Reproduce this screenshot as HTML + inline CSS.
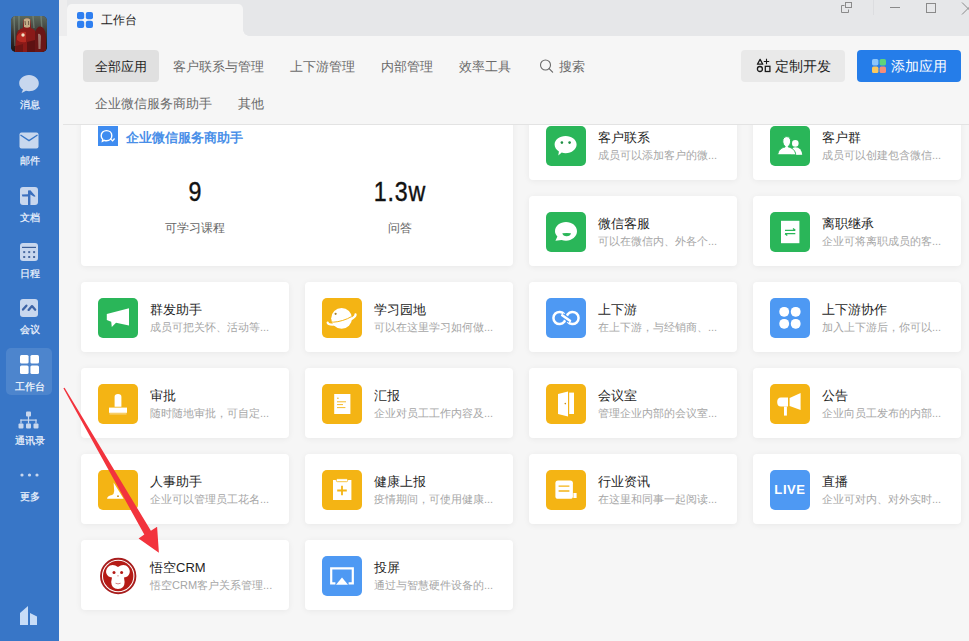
<!DOCTYPE html>
<html><head><meta charset="utf-8"><style>
*{margin:0;padding:0;box-sizing:border-box}
html,body{width:969px;height:641px;overflow:hidden;background:#f6f6f6;font-family:"Liberation Sans",sans-serif}
body{position:relative}
.a{position:absolute}
svg{display:block}
#side{left:0;top:0;width:59px;height:641px;background:#3876c7}
#titlebar{left:59px;top:0;width:910px;height:36px;background:#e6e7e9}
#tab{left:67px;top:4px;width:176px;height:32px;background:#f6f6f6;border-radius:5px 5px 0 0}
#hdr{left:59px;top:36px;width:910px;height:88px;background:#f6f6f6}
#hline{left:63px;top:124px;width:906px;height:1px;background:#e3e3e3}
.nav{height:32px;line-height:32px;font-size:13px;color:#6a6a6a;white-space:nowrap}
.card{background:#fff;border-radius:4px;box-shadow:0 1px 6px rgba(0,0,0,0.06)}
.ic{width:40px;height:40px;border-radius:5px;overflow:hidden}
.t{font-size:13px;line-height:16px;color:#1f1f1f;white-space:nowrap}
.d{font-size:11px;line-height:14px;color:#a6a6a6;white-space:nowrap}
.sl{font-size:10px;line-height:12px;color:#f4f8ff;-webkit-text-stroke:0.2px #f4f8ff;white-space:nowrap;text-align:center;width:59px;left:0}
.g{background:#2db55a}.o{background:#f9ae0b}.b{background:#4b91ee}
</style></head><body>
<div class="a card" style="left:81px;top:110px;width:432px;height:156px"></div>
<svg class="a" style="left:98px;top:126px" width="20" height="20" viewBox="0 0 20 20"><rect width="20" height="20" fill="#3f8cf0"/><path d="M8.5 4.6 C11.6 4.6 13.8 6.8 13.8 9.7 C13.8 12.6 11.6 14.8 8.5 14.8 C7.7 14.8 7 14.6 6.3 14.3 L4.4 15.2 L4.7 13.3 C3.7 12.4 3.2 11.1 3.2 9.7 C3.2 6.8 5.4 4.6 8.5 4.6Z" fill="none" stroke="#fff" stroke-width="1.4"/><path d="M12.3 12.6 L14.6 14.9 L16.6 12.5" stroke="#fff" stroke-width="1.3" fill="none"/></svg>
<div class="a" style="left:126px;top:129.5px;font-size:13px;line-height:16px;font-weight:bold;color:#4a8fe8;white-space:nowrap">企业微信服务商助手</div>
<div class="a" style="left:145px;top:176.5px;width:100px;text-align:center;font-size:27px;line-height:30px;color:#111;-webkit-text-stroke:0.4px #111;transform:scaleX(0.86)">9</div>
<div class="a" style="left:350px;top:176.5px;width:100px;text-align:center;font-size:27px;line-height:30px;color:#111;letter-spacing:1px;-webkit-text-stroke:0.4px #111;transform:scaleX(0.86)">1.3w</div>
<div class="a" style="left:145px;top:221px;width:100px;text-align:center;font-size:12px;line-height:14px;color:#666">可学习课程</div>
<div class="a" style="left:350px;top:221px;width:100px;text-align:center;font-size:12px;line-height:14px;color:#666">问答</div>
<div class="a card" style="left:529px;top:110px;width:208px;height:70px"></div>
<div class="a" style="left:546px;top:126px"><svg width="40" height="40" viewBox="0 0 40 40"><rect width="40" height="40" rx="5" fill="#2ab659"/><path d="M19.6 10 C25.8 10 30.6 13.8 30.6 18.6 C30.6 23.4 25.8 27.2 19.6 27.2 C18.2 27.2 16.9 27 15.7 26.6 L12.3 29.6 L12.9 25.4 C10.3 23.9 8.6 21.4 8.6 18.6 C8.6 13.8 13.4 10 19.6 10Z" fill="#fff"/><circle cx="15.9" cy="16.6" r="1.3" fill="#1f8f44"/><circle cx="23.6" cy="16.6" r="1.3" fill="#1f8f44"/></svg></div>
<div class="a t" style="left:598px;top:130px">客户联系</div>
<div class="a d" style="left:598px;top:148px">成员可以添加客户的微...</div>
<div class="a card" style="left:753px;top:110px;width:208px;height:70px"></div>
<div class="a" style="left:770px;top:126px"><svg width="40" height="40" viewBox="0 0 40 40"><rect width="40" height="40" rx="5" fill="#2ab659"/><circle cx="25.3" cy="17.4" r="3.3" fill="#fff"/><path d="M21 29 L21 25 Q22 21.5 25.3 21.2 Q31.5 21.5 32.2 28.8 Z" fill="#fff"/><path d="M16.7 10.6 C19.3 10.6 20.6 12.6 20.6 15.2 C20.6 17.6 19.6 19.4 18.3 20.3 L18.3 21 C22.2 21.7 25.2 24.2 25.8 28.8 L7.7 28.8 C8.2 24.2 11.2 21.7 15.1 21 L15.1 20.3 C13.8 19.4 12.8 17.6 12.8 15.2 C12.8 12.6 14.1 10.6 16.7 10.6Z" fill="#fff" stroke="#2ab659" stroke-width="1"/></svg></div>
<div class="a t" style="left:822px;top:130px">客户群</div>
<div class="a d" style="left:822px;top:148px">成员可以创建包含微信...</div>
<div class="a card" style="left:529px;top:196px;width:208px;height:70px"></div>
<div class="a" style="left:546px;top:212px"><svg width="40" height="40" viewBox="0 0 40 40"><rect width="40" height="40" rx="5" fill="#2ab659"/><path d="M20 10 C25.8 10 31 13.9 31 19.3 C31 24.7 25.8 28.7 20 28.7 C18.5 28.7 17 28.4 15.6 27.9 L9.4 28.8 L11.4 24.4 C9.9 22.9 9 21.2 9 19.3 C9 13.9 14.2 10 20 10Z" fill="#fff"/><path d="M16.3 21.2 Q20.6 21 25 21.2 Q24.4 24.2 20.6 24.2 Q17 24.2 16.3 21.2Z" fill="#2ab659"/></svg></div>
<div class="a t" style="left:598px;top:216px">微信客服</div>
<div class="a d" style="left:598px;top:234px">可以在微信内、外各个...</div>
<div class="a card" style="left:753px;top:196px;width:208px;height:70px"></div>
<div class="a" style="left:770px;top:212px"><svg width="40" height="40" viewBox="0 0 40 40"><rect width="40" height="40" rx="5" fill="#2ab659"/><rect x="11" y="8.8" width="18.4" height="22.4" fill="#fff"/><path d="M15 18.3 L25.3 18.3 M23 16.6 L25.3 18.3 M15 21.7 L25.3 21.7 M15 21.7 L17.3 23.4" stroke="#2ab659" stroke-width="1.3" fill="none"/></svg></div>
<div class="a t" style="left:822px;top:216px">离职继承</div>
<div class="a d" style="left:822px;top:234px">企业可将离职成员的客...</div>
<div class="a card" style="left:81px;top:282px;width:208px;height:70px"></div>
<div class="a" style="left:98px;top:298px"><svg width="40" height="40" viewBox="0 0 40 40"><rect width="40" height="40" rx="5" fill="#2ab659"/><path d="M8.8 16 L31 10.3 L31 27.5 L18 24.8 L13.8 29 L13.2 23.7 L8.8 21.9Z" fill="#fff"/></svg></div>
<div class="a t" style="left:150px;top:302px">群发助手</div>
<div class="a d" style="left:150px;top:320px">成员可把关怀、活动等...</div>
<div class="a card" style="left:305px;top:282px;width:208px;height:70px"></div>
<div class="a" style="left:322px;top:298px"><svg width="40" height="40" viewBox="0 0 40 40"><rect width="40" height="40" rx="5" fill="#f4b414"/><defs><clipPath id="pl"><circle cx="19.6" cy="20.3" r="10.4"/></clipPath></defs><circle cx="19.6" cy="20.3" r="10.4" fill="#fff"/><path d="M5.7 24.7 A14.5 4.5 -17 0 0 33.5 16.3" stroke="#fff" stroke-width="2.3" fill="none" stroke-linecap="round"/><path d="M5.9 23.0 A14.5 4.5 -17 0 0 33.3 14.6" stroke="#f4b414" stroke-width="1" fill="none" clip-path="url(#pl)"/><circle cx="13.6" cy="15.8" r="1.1" fill="#a8822e"/></svg></div>
<div class="a t" style="left:374px;top:302px">学习园地</div>
<div class="a d" style="left:374px;top:320px">可以在这里学习如何做...</div>
<div class="a card" style="left:529px;top:282px;width:208px;height:70px"></div>
<div class="a" style="left:546px;top:298px"><svg width="40" height="40" viewBox="0 0 40 40"><rect width="40" height="40" rx="5" fill="#4e99f3"/><path d="M18.3 16.2 A6.1 6.1 0 1 0 18.3 23.8 L21.7 16.2 A6.1 6.1 0 1 1 21.7 23.8" stroke="#fff" stroke-width="2.5" fill="none"/><path d="M16.2 17.2 L24 22.8" stroke="#4e99f3" stroke-width="4.8"/><path d="M16.2 17.2 L24 22.8" stroke="#fff" stroke-width="2.5" stroke-linecap="round"/></svg></div>
<div class="a t" style="left:598px;top:302px">上下游</div>
<div class="a d" style="left:598px;top:320px">在上下游，与经销商、...</div>
<div class="a card" style="left:753px;top:282px;width:208px;height:70px"></div>
<div class="a" style="left:770px;top:298px"><svg width="40" height="40" viewBox="0 0 40 40"><rect width="40" height="40" rx="5" fill="#4e99f3"/><rect x="9.3" y="8.9" width="9.8" height="9.8" rx="4.6" fill="#fff"/><rect x="20.8" y="8.9" width="9.8" height="9.8" rx="4.6" fill="#fff"/><rect x="9.3" y="20.9" width="9.8" height="9.8" rx="4.6" fill="#fff"/><rect x="20.8" y="20.9" width="9.8" height="9.8" rx="4.6" fill="#fff"/></svg></div>
<div class="a t" style="left:822px;top:302px">上下游协作</div>
<div class="a d" style="left:822px;top:320px">加入上下游后，你可以...</div>
<div class="a card" style="left:81px;top:368px;width:208px;height:70px"></div>
<div class="a" style="left:98px;top:384px"><svg width="40" height="40" viewBox="0 0 40 40"><rect width="40" height="40" rx="5" fill="#f4b414"/><path d="M16.6 12.8 Q16.6 10 20 10 Q23.4 10 23.4 12.8 L23.4 22.8 L16.6 22.8Z" fill="#fff"/><rect x="11" y="23.6" width="18" height="5.2" fill="#fff"/><rect x="11.5" y="29.4" width="17" height="1" fill="#fff" opacity="0.6"/></svg></div>
<div class="a t" style="left:150px;top:388px">审批</div>
<div class="a d" style="left:150px;top:406px">随时随地审批，可自定...</div>
<div class="a card" style="left:305px;top:368px;width:208px;height:70px"></div>
<div class="a" style="left:322px;top:384px"><svg width="40" height="40" viewBox="0 0 40 40"><rect width="40" height="40" rx="5" fill="#f4b414"/><rect x="12.2" y="10" width="16.2" height="20" fill="#fff"/><circle cx="15.9" cy="14.3" r="0.8" fill="#f4b414"/><path d="M15 17.8 L24 17.8 M15 20.6 L21 20.6 M15 23.6 L23.4 23.6" stroke="#f4b414" stroke-width="0.9"/></svg></div>
<div class="a t" style="left:374px;top:388px">汇报</div>
<div class="a d" style="left:374px;top:406px">企业对员工工作内容及...</div>
<div class="a card" style="left:529px;top:368px;width:208px;height:70px"></div>
<div class="a" style="left:546px;top:384px"><svg width="40" height="40" viewBox="0 0 40 40"><rect width="40" height="40" rx="5" fill="#f4b414"/><path d="M12 10 L22 7.4 L22 32.6 L12 30Z" fill="#fff"/><rect x="23.2" y="8.6" width="4.8" height="21.4" fill="#fff"/><circle cx="19.3" cy="19.6" r="0.8" fill="#c88a10"/></svg></div>
<div class="a t" style="left:598px;top:388px">会议室</div>
<div class="a d" style="left:598px;top:406px">管理企业内部的会议室...</div>
<div class="a card" style="left:753px;top:368px;width:208px;height:70px"></div>
<div class="a" style="left:770px;top:384px"><svg width="40" height="40" viewBox="0 0 40 40"><rect width="40" height="40" rx="5" fill="#f4b414"/><path d="M11 13.4 L18 13.4 L18 22.5 L11 22.5 Q7.2 22.5 7.2 18 Q7.2 13.4 11 13.4Z" fill="#fff"/><path d="M19.6 14 L30.6 9 L30.6 26 L19.6 21.9Z" fill="#fff"/><rect x="14" y="22.5" width="2.9" height="9.1" fill="#fff"/></svg></div>
<div class="a t" style="left:822px;top:388px">公告</div>
<div class="a d" style="left:822px;top:406px">企业向员工发布的内部...</div>
<div class="a card" style="left:81px;top:454px;width:208px;height:70px"></div>
<div class="a" style="left:98px;top:470px"><svg width="40" height="40" viewBox="0 0 40 40"><rect width="40" height="40" rx="5" fill="#f4b414"/><path d="M9 28.8 Q9.6 25.6 14 25 Q16 24.4 16.2 21 L15.6 12.6 L25.6 28.8Z" fill="#fff"/><circle cx="20" cy="26.2" r="0.9" fill="#c88a10"/></svg></div>
<div class="a t" style="left:150px;top:474px">人事助手</div>
<div class="a d" style="left:150px;top:492px">企业可以管理员工花名...</div>
<div class="a card" style="left:305px;top:454px;width:208px;height:70px"></div>
<div class="a" style="left:322px;top:470px"><svg width="40" height="40" viewBox="0 0 40 40"><rect width="40" height="40" rx="5" fill="#f4b414"/><rect x="11" y="10" width="18.4" height="20" fill="#fff"/><rect x="14.4" y="8.7" width="11.2" height="3" rx="1" fill="#fff" stroke="#f4b414" stroke-width="0.8"/><path d="M15.2 20.5 L24.8 20.5 M20 15.8 L20 25.2" stroke="#f4b414" stroke-width="1.8"/></svg></div>
<div class="a t" style="left:374px;top:474px">健康上报</div>
<div class="a d" style="left:374px;top:492px">疫情期间，可使用健康...</div>
<div class="a card" style="left:529px;top:454px;width:208px;height:70px"></div>
<div class="a" style="left:546px;top:470px"><svg width="40" height="40" viewBox="0 0 40 40"><rect width="40" height="40" rx="5" fill="#f4b414"/><rect x="9.4" y="10.6" width="17.5" height="18.2" rx="2.6" fill="#fff"/><path d="M12.6 16.2 L23.4 16.2 M12.6 21 L23.4 21" stroke="#f4b414" stroke-width="1.3"/><rect x="27.4" y="23" width="3.2" height="5" fill="#fff"/></svg></div>
<div class="a t" style="left:598px;top:474px">行业资讯</div>
<div class="a d" style="left:598px;top:492px">在这里和同事一起阅读...</div>
<div class="a card" style="left:753px;top:454px;width:208px;height:70px"></div>
<div class="a" style="left:770px;top:470px"><svg width="40" height="40" viewBox="0 0 40 40"><rect width="40" height="40" rx="5" fill="#4e99f3"/><text x="20" y="24.2" text-anchor="middle" font-family="Liberation Sans" font-weight="bold" font-size="13" fill="#fff" letter-spacing="0.6">LIVE</text></svg></div>
<div class="a t" style="left:822px;top:474px">直播</div>
<div class="a d" style="left:822px;top:492px">企业可对内、对外实时...</div>
<div class="a card" style="left:81px;top:540px;width:208px;height:70px"></div>
<div class="a" style="left:98px;top:556px"><svg width="40" height="40" viewBox="0 0 40 40">
<circle cx="20.2" cy="20" r="17.2" fill="none" stroke="#a81d1d" stroke-width="1.9"/>
<circle cx="20.2" cy="20" r="15.2" fill="#b51b16"/>
<path d="M20 11 Q16 8 12 9.5 Q7.5 12 8.2 17 Q9.5 21 14 21.5 L13.2 26 Q13.5 32.9 20 32.9 Q26.6 32.9 26.6 26 L26 21.5 Q30.5 21 31.6 17 Q32.4 12 28 9.5 Q24 8 20 11Z" fill="#fff"/>
<circle cx="16" cy="16.6" r="1.5" fill="#b51b16"/><circle cx="23.6" cy="16.6" r="1.5" fill="#b51b16"/>
<circle cx="20" cy="19.8" r="0.6" fill="#c35050"/>
<path d="M17.5 27.2 Q20 28.6 22.6 27.2" stroke="#c35050" stroke-width="0.7" fill="none"/>
</svg></div>
<div class="a t" style="left:150px;top:560px">悟空CRM</div>
<div class="a d" style="left:150px;top:578px">悟空CRM客户关系管理...</div>
<div class="a card" style="left:305px;top:540px;width:208px;height:70px"></div>
<div class="a" style="left:322px;top:556px"><svg width="40" height="40" viewBox="0 0 40 40"><rect width="40" height="40" rx="5" fill="#4e99f3"/><path d="M13.4 27.4 L9.2 27.4 L9.2 12.3 L30.8 12.3 L30.8 27.4 L26.6 27.4" stroke="#fff" stroke-width="2.2" fill="none"/><path d="M20 21.6 L26 28.8 L14 28.8Z" fill="#fff"/></svg></div>
<div class="a t" style="left:374px;top:560px">投屏</div>
<div class="a d" style="left:374px;top:578px">通过与智慧硬件设备的...</div>
<div id="hdr" class="a"></div>
<div id="hline" class="a"></div>
<div class="a" style="left:83px;top:50px;width:76px;height:32px;border-radius:4px;background:#e0e0e0"></div>
<div class="a nav" style="left:95px;top:50.5px;color:#1f1f1f">全部应用</div>
<div class="a nav" style="left:173px;top:50.5px;color:#6a6a6a">客户联系与管理</div>
<div class="a nav" style="left:290px;top:50.5px;color:#6a6a6a">上下游管理</div>
<div class="a nav" style="left:381px;top:50.5px;color:#6a6a6a">内部管理</div>
<div class="a nav" style="left:459px;top:50.5px;color:#6a6a6a">效率工具</div>
<div class="a nav" style="left:559px;top:50.5px;color:#6a6a6a">搜索</div>
<div class="a nav" style="left:95px;top:87.5px">企业微信服务商助手</div>
<div class="a nav" style="left:238px;top:87.5px">其他</div>
<svg class="a" style="left:539px;top:59px" width="15" height="15" viewBox="0 0 15 15">
<circle cx="6.5" cy="6" r="5" stroke="#6a6a6a" stroke-width="1.1" fill="none"/><path d="M10.1 9.6 L13.6 13.1" stroke="#6a6a6a" stroke-width="1.2" stroke-linecap="round"/></svg>
<div class="a" style="left:741px;top:50px;width:104px;height:32px;border-radius:4px;background:#e9e9e9"></div>
<svg class="a" style="left:756px;top:58px" width="15" height="16" viewBox="0 0 15 16">
<g stroke="#1a1a1a" stroke-width="1.3" fill="none"><path d="M4.1 1.4 L6.8 6.2 L1.4 6.2Z" stroke-linejoin="round"/><path d="M10.5 0.8 L10.5 6.2 M7.8 3.5 L13.2 3.5" stroke-width="1.1"/>
<circle cx="3.9" cy="11" r="2.5"/><rect x="9.3" y="8.3" width="4.6" height="5.2"/></g></svg>
<div class="a" style="left:775px;top:50px;height:32px;line-height:32px;font-size:14px;color:#1f1f1f;white-space:nowrap">定制开发</div>
<div class="a" style="left:857px;top:50px;width:104px;height:32px;border-radius:4px;background:#257de9"></div>
<svg class="a" style="left:872px;top:59px" width="14" height="14" viewBox="0 0 14 14">
<rect x="0" y="0" width="6.4" height="6.4" rx="1.6" fill="#8cc6fb"/><rect x="7.6" y="0" width="6.4" height="6.4" rx="1.6" fill="#5fd37a"/>
<rect x="0" y="7.6" width="6.4" height="6.4" rx="1.6" fill="#fbc95d"/><rect x="7.6" y="7.6" width="6.4" height="6.4" rx="1.6" fill="#f58d78"/></svg>
<div class="a" style="left:891px;top:50px;height:32px;line-height:32px;font-size:14px;color:#fff;white-space:nowrap">添加应用</div>
<div id="titlebar" class="a"></div>
<div class="a" style="left:59px;top:0px;width:8px;height:36px;background:#ededee"></div>
<div id="tab" class="a"></div>
<div class="a" style="left:243px;top:30px;width:6px;height:6px;background:radial-gradient(circle at 100% 0,rgba(246,246,246,0) 5.5px,#f6f6f6 6px)"></div>
<svg class="a" style="left:77px;top:12px" width="16" height="16" viewBox="0 0 16 16">
<g fill="#2f7ff0"><rect x="0" y="0" width="7.2" height="7.2" rx="2"/><rect x="8.8" y="0" width="7.2" height="7.2" rx="2"/>
<rect x="0" y="8.8" width="7.2" height="7.2" rx="2"/><rect x="8.8" y="8.8" width="7.2" height="7.2" rx="2"/></g></svg>
<div class="a" style="left:101px;top:13px;font-size:12px;line-height:14px;color:#222">工作台</div>
<svg class="a" style="left:838px;top:0px" width="131" height="16" viewBox="0 0 131 16">
<g stroke="#8a8a8a" stroke-width="1" fill="none">
<path d="M3.5 5.5 L3.5 12.5 L10.5 12.5 L10.5 9.5"/><path d="M3.5 5.5 L6.5 5.5"/>
<rect x="7.5" y="2.5" width="6" height="5"/>
<path d="M52 7.5 L62 7.5"/>
<rect x="88.5" y="3.5" width="9" height="9"/>
<path d="M124 2.5 L136 14.5 M136 2.5 L124 14.5"/>
</g>
<path d="M35.5 0 L35.5 15" stroke="#dcdde0" stroke-width="1"/>
</svg>
<div id="side" class="a">
<div class="a" style="left:11px;top:16px;width:36px;height:36px;border-radius:5px;overflow:hidden;background:#3a2a22">
<svg width="36" height="36" viewBox="0 0 36 36">
<defs><linearGradient id="av1" x1="0" y1="0" x2="0" y2="1"><stop offset="0" stop-color="#5d6a5e"/><stop offset="0.5" stop-color="#3a3632"/><stop offset="1" stop-color="#1c1414"/></linearGradient></defs>
<rect width="36" height="36" fill="url(#av1)"/>
<path d="M3 0 L4 30 M8 0 L8 14 M22 0 L23 12 M30 0 L31 14" stroke="#8fa596" stroke-width="1.4" opacity="0.45"/>
<path d="M4 36 L5 21 Q6 13 12 12 L12.5 4 Q16 0.5 19.5 4 L20 12 Q25 13 25.5 20 L25 36Z" fill="#8a1a18"/>
<path d="M12.8 3.5 Q16 1 19.2 3.5 L19 11 Q16 12.5 13 11Z" fill="#c4ad88"/>
<path d="M14 5 L14.5 9 M17.5 5 L17.6 9" stroke="#5a4a3a" stroke-width="0.8"/>
<path d="M24 36 L24 16 Q27 9 31 11 Q35 14 35 22 L35 36Z" fill="#6a1616"/>
<path d="M27 18 Q29 17 30 20 L29.5 33 L27.5 33Z" fill="#a98a80" opacity="0.8"/>
<path d="M6 20 Q9 15 15 16 L15 26 Q9 27 6 24Z" fill="#b52a22"/>
<path d="M16 26 L24 24 L24 36 L16 36Z" fill="#4a1010" opacity="0.7"/>
<path d="M5 30 L12 28 L12 36 L5 36Z" fill="#5a1212" opacity="0.6"/>
<circle cx="12" cy="19" r="1.7" fill="#f1e4c8"/>
</svg></div>
<div class="a" style="left:6px;top:348px;width:46px;height:47px;border-radius:5px;background:rgba(255,255,255,0.11)"></div>
<svg class="a" style="left:18px;top:74px" width="22" height="20" viewBox="0 0 22 20">
<path d="M11 1 C16.6 1 20.8 4.7 20.8 9.2 C20.8 13.7 16.6 17.2 11 17.2 C9.9 17.2 8.9 17.1 8 16.8 L3.6 18.9 L5 15.6 C2.6 14.1 1.2 11.8 1.2 9.2 C1.2 4.7 5.4 1 11 1Z" fill="#c8d7ee"/></svg>
<svg class="a" style="left:19px;top:132px" width="20" height="17" viewBox="0 0 20 17">
<rect x="0.5" y="0.5" width="19" height="16" rx="2" fill="#c8d7ee"/>
<path d="M1.5 3 L10 8.6 L18.5 3" stroke="#3876c7" stroke-width="1.3" fill="none"/></svg>
<svg class="a" style="left:20px;top:187px" width="18" height="18" viewBox="0 0 18 18">
<rect width="18" height="18" rx="3" fill="#c8d7ee"/>
<path d="M8 3.5 L10.4 3.3 L15.6 9.2 L14.2 9.8 L10.4 7.6 L10.4 18 L8 18 L8 9.6 L2.4 9.6 L1.8 7.5 L8 7.2Z" fill="#3a6fbe"/></svg>
<svg class="a" style="left:20px;top:243px" width="18" height="18" viewBox="0 0 18 18">
<rect width="18" height="18" rx="3" fill="#c8d7ee"/>
<rect x="2" y="3.8" width="14" height="1.2" fill="#3d5f98"/>
<g fill="#4a6aa0"><rect x="3.2" y="8.1" width="2" height="2"/><rect x="8.2" y="8.1" width="2" height="2"/><rect x="13.1" y="8.1" width="2" height="2"/>
<rect x="3.2" y="13" width="2" height="2"/><rect x="8.2" y="13" width="2" height="2"/><rect x="13.1" y="13" width="2" height="2"/></g></svg>
<svg class="a" style="left:20px;top:299px" width="18" height="18" viewBox="0 0 18 18">
<rect width="18" height="18" rx="3" fill="#c8d7ee"/>
<path d="M3 10.6 L6.4 6.7 M8.6 10.9 L12 7.1 L15.2 10.7" stroke="#3e64a6" stroke-width="2.3" fill="none" stroke-linejoin="round" stroke-linecap="round"/></svg>
<svg class="a" style="left:20px;top:355px" width="19" height="19" viewBox="0 0 19 19">
<g fill="#fff"><rect x="0" y="0" width="8.6" height="8.6" rx="1.5"/><rect x="10.4" y="0" width="8.6" height="8.6" rx="1.5"/>
<rect x="0" y="10.4" width="8.6" height="8.6" rx="1.5"/><rect x="10.4" y="10.4" width="8.6" height="8.6" rx="1.5"/></g></svg>
<svg class="a" style="left:18px;top:411px" width="21" height="18" viewBox="0 0 21 18">
<g fill="#c8d7ee"><rect x="8" y="0.5" width="5" height="5" rx="1"/><rect x="0.5" y="12.5" width="5" height="5" rx="1"/><rect x="8" y="12.5" width="5" height="5" rx="1"/><rect x="15.5" y="12.5" width="5" height="5" rx="1"/>
<rect x="9.9" y="5" width="1.2" height="4"/><rect x="2.4" y="8.5" width="16.2" height="1.2"/><rect x="2.4" y="8.5" width="1.2" height="4"/><rect x="17.4" y="8.5" width="1.2" height="4"/><rect x="9.9" y="8.5" width="1.2" height="4"/></g></svg>
<svg class="a" style="left:20px;top:473px" width="19" height="4" viewBox="0 0 19 4">
<g fill="#c8d7ee"><circle cx="2" cy="2" r="1.6"/><circle cx="9.5" cy="2" r="1.6"/><circle cx="17" cy="2" r="1.6"/></g></svg>
<svg class="a" style="left:19px;top:605px" width="19" height="21" viewBox="0 0 19 21">
<path d="M1 8 L9 1 L9 20 L1 20Z" fill="#c7dcf7"/><path d="M11 8 L18 11.5 L18 20 L11 20Z" fill="#c7dcf7"/></svg>
<div class="a sl" style="top:99px;color:#eef3fc">消息</div>
<div class="a sl" style="top:155px;color:#eef3fc">邮件</div>
<div class="a sl" style="top:211.5px;color:#eef3fc">文档</div>
<div class="a sl" style="top:268px;color:#eef3fc">日程</div>
<div class="a sl" style="top:324px;color:#eef3fc">会议</div>
<div class="a sl" style="top:380.5px;color:#ffffff">工作台</div>
<div class="a sl" style="top:435px;color:#eef3fc">通讯录</div>
<div class="a sl" style="top:491px;color:#eef3fc">更多</div>
</div>
<svg class="a" style="left:0;top:0" width="969" height="641" viewBox="0 0 969 641">
<path d="M63.4 388.3 L144.3 534.6 L138.6 538.5 L158.9 552.8 L157.1 526.8 L150.9 530.8 L64.6 387.7Z" fill="#f2333d"/></svg>
<script>(function(){
 var s=document.createElement('span');
 s.style.cssText='position:absolute;left:0;top:-500px;font-size:100px;font-family:"Liberation Sans",sans-serif;white-space:nowrap';
 s.textContent='\u5de5\u4f5c\u53f0\u4e2d\u6587';
 document.body.appendChild(s);
 var w=s.getBoundingClientRect().width/5;
 s.parentNode.removeChild(s);
 if(!(w>0&&w<92))return;
 var ls=((100-w)/100).toFixed(3)+'em';
 var re=/[\u3000-\u9fff\uff00-\uffef]+/g;
 var walker=document.createTreeWalker(document.body,NodeFilter.SHOW_TEXT,null,false);
 var nodes=[];while(walker.nextNode()){var n=walker.currentNode;if(n.parentNode.nodeName!='SCRIPT'&&n.parentNode.nodeName!='text'&&re.test(n.nodeValue))nodes.push(n);re.lastIndex=0;}
 nodes.forEach(function(n){
  var t=n.nodeValue,f=document.createDocumentFragment(),last=0,m;re.lastIndex=0;
  while((m=re.exec(t))){if(m.index>last)f.appendChild(document.createTextNode(t.slice(last,m.index)));var sp=document.createElement('span');sp.style.letterSpacing=ls;sp.textContent=m[0];f.appendChild(sp);last=m.index+m[0].length;}
  if(last<t.length)f.appendChild(document.createTextNode(t.slice(last)));
  n.parentNode.replaceChild(f,n);
 });
})();</script>
</body></html>
